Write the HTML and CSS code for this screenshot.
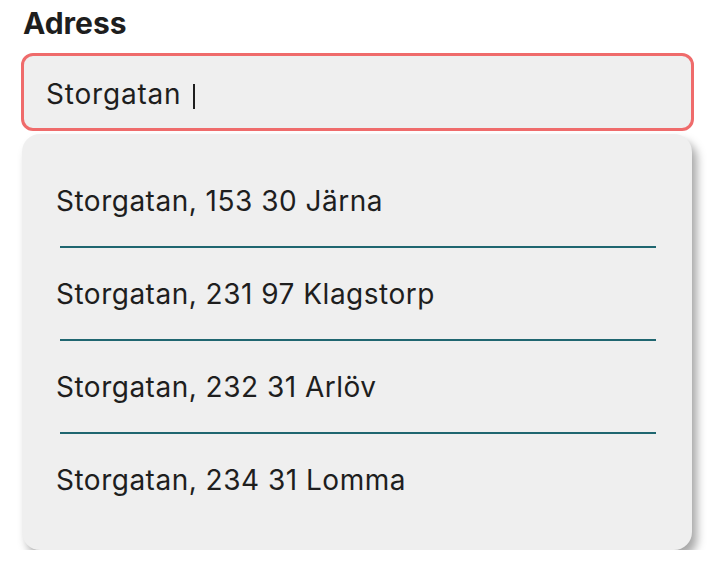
FILE: index.html
```html
<!DOCTYPE html>
<html lang="sv">
  <head>
    <meta charset="UTF-8" />
    <title>Adress</title>
    <link rel="stylesheet" href="styles.css">
  </head>
  <body>
    <div class="field">
      <label for="address" class="label">Adress</label>
      <div class="input">Storgatan <span class="caret"></span></div>

      <!-- Suggestions -->
      <ul class="suggestions">
        <li>Storgatan, 153 30 Järna</li>
        <li>Storgatan, 231 97 Klagstorp</li>
        <li>Storgatan, 232 31 Arlöv</li>
        <li>Storgatan, 234 31 Lomma</li>
      </ul>
    </div>
  </body>
</html>
```
FILE: styles.css
```css
body {
  margin: 0;
  background-color: #fff;
  font-family: Inter, "Noto Sans", sans-serif;
  color: #1e1e1e;
}
.field {
  padding: 6px 26px 0 21px;
}
.label {
  display: block;
  font-size: 30px;
  font-weight: 700;
  padding-left: 2px;
  height: 47px;
  line-height: 34px;
}
.input {
  height: 70px;
  padding-top: 2px;
  line-height: 72px;
  padding-left: 22px;
  background-color: #efefef;
  border: 3px solid #ef6b6b;
  border-radius: 12px;
  font-size: 28px;
  letter-spacing: 0.8px;
}
.caret {
  display: inline-block;
  width: 2px;
  height: 25px;
  margin-left: 3px;
  background-color: #1e1e1e;
  vertical-align: -5px;
}
.suggestions {
  list-style: none;
  margin: 3px 2px 0 1px;
  padding: 21px 36px 25px 36px;
  background-color: #efefef;
  border-radius: 18px;
  box-shadow: 5px 7px 10px rgba(0, 0, 0, 0.35);
}
.suggestions li {
  height: 89px;
  padding-top: 2px;
  line-height: 89px;
  font-size: 28px;
  letter-spacing: 0.5px;
  border-bottom: 2px solid #1f6670;
  margin-left: 2px;
  text-indent: -4px;
}
.suggestions li:last-child {
  border-bottom: none;
}
```
